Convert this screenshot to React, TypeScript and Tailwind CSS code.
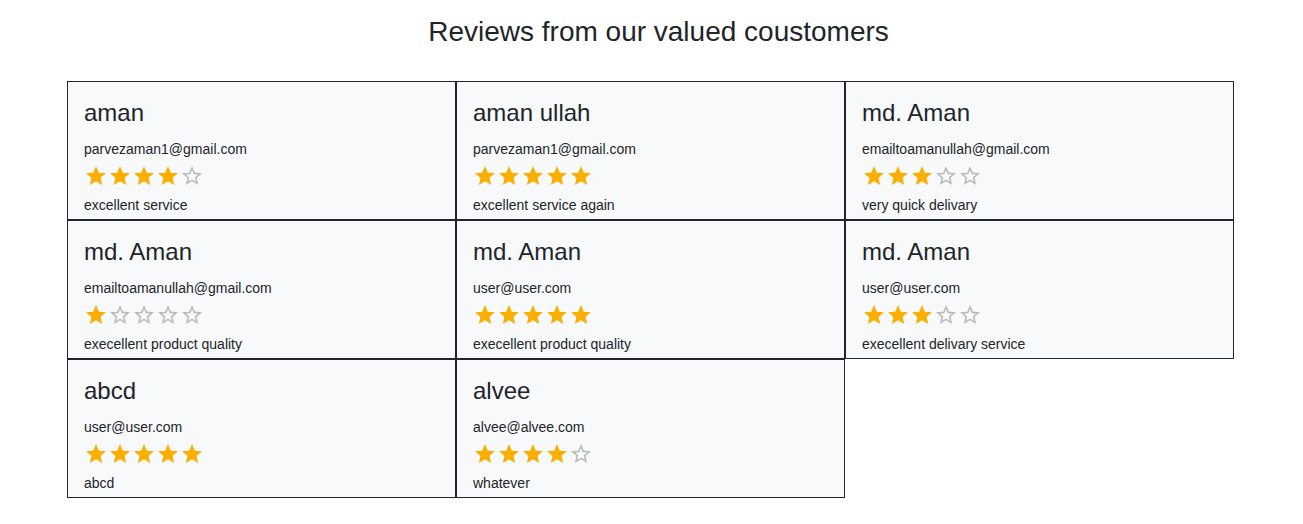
const reviews = [
  { name: 'aman', email: 'parvezaman1@gmail.com', rating: 4, text: 'excellent service' },
  { name: 'aman ullah', email: 'parvezaman1@gmail.com', rating: 5, text: 'excellent service again' },
  { name: 'md. Aman', email: 'emailtoamanullah@gmail.com', rating: 3, text: 'very quick delivary' },
  { name: 'md. Aman', email: 'emailtoamanullah@gmail.com', rating: 1, text: 'execellent product quality' },
  { name: 'md. Aman', email: 'user@user.com', rating: 5, text: 'execellent product quality' },
  { name: 'md. Aman', email: 'user@user.com', rating: 3, text: 'execellent delivary service' },
  { name: 'abcd', email: 'user@user.com', rating: 5, text: 'abcd' },
  { name: 'alvee', email: 'alvee@alvee.com', rating: 4, text: 'whatever' },
];

function Star({ filled }: { filled: boolean }) {
  return filled ? (
    <svg viewBox="0 0 24 24" className="h-6 w-6 fill-[#faaf00]">
      <path d="M12 17.27L18.18 21l-1.64-7.36L22 9.24l-7.19-.61L12 2 9.19 8.63 2 9.24l5.46 4.73L5.82 21z" />
    </svg>
  ) : (
    <svg viewBox="0 0 24 24" className="h-6 w-6 fill-black/25">
      <path d="M22 9.24l-7.19-.62L12 2 9.19 8.63 2 9.24l5.46 4.73L5.82 21 12 17.27 18.18 21l-1.63-7.03L22 9.24zM12 15.4l-3.76 2.27 1-4.28-3.32-2.88 4.38-.38L12 6.1l1.71 4.04 4.38.38-3.32 2.88 1 4.28L12 15.4z" />
    </svg>
  );
}

export default function App() {
  return (
    <div className="min-h-screen bg-white font-['Liberation_Sans',Arial,sans-serif] text-[#212529]">
      <h2 className="pl-[14px] pt-[15px] text-center text-[28px] leading-[34px]">
        Reviews from our valued coustomers
      </h2>

      <div className="mt-[32px] pl-[67px]">
        <div className="grid grid-cols-[repeat(3,389px)]">
          {reviews.map((r, i) => (
            <div key={i} className="h-[139px] border border-[#212529] bg-[#f8f9fa] px-4 pt-4">
              <h4 className="text-[24px] leading-[29px]">{r.name}</h4>
              <p className="mt-[12px] text-[14px] leading-[21px]">{r.email}</p>
              <div className="mt-[4px] flex">
                {[1, 2, 3, 4, 5].map((n) => (
                  <Star key={n} filled={n <= r.rating} />
                ))}
              </div>
              <p className="mt-[7px] text-[14px] leading-[21px]">{r.text}</p>
            </div>
          ))}
        </div>
      </div>
    </div>
  );
}
